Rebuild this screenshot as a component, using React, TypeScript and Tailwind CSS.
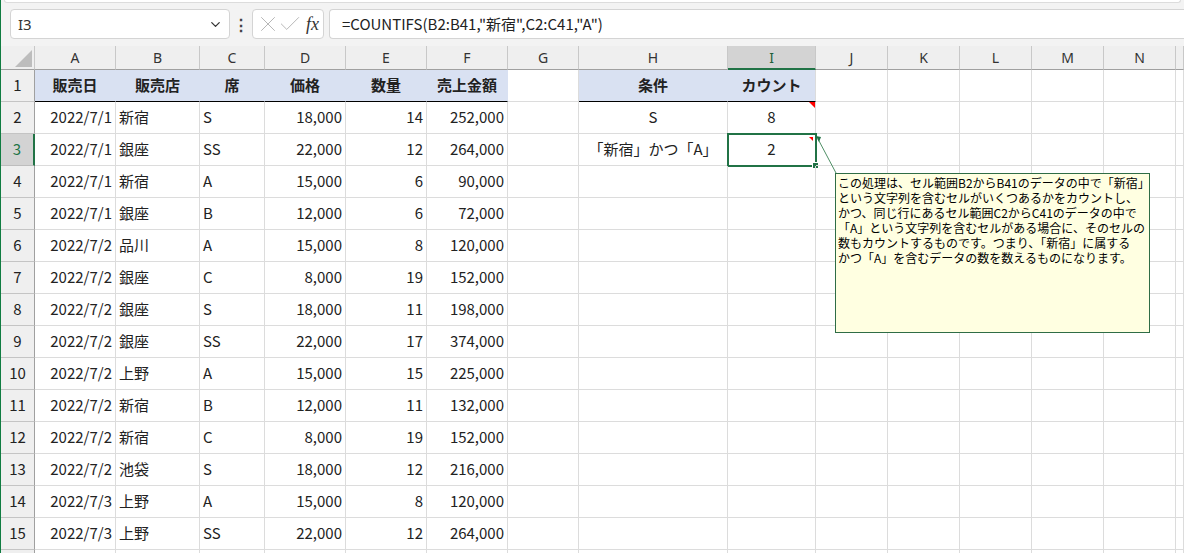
import { ChevronDown, X, Check } from "lucide-react";

type Row = {
  a: string;
  b: string;
  c: string;
  d: string;
  e: string;
  f: string;
  h?: string;
  i?: string;
};

const rows: Row[] = [
  { a: "2022/7/1", b: "新宿", c: "S", d: "18,000", e: "14", f: "252,000", h: "S", i: "8" },
  { a: "2022/7/1", b: "銀座", c: "SS", d: "22,000", e: "12", f: "264,000", h: "「新宿」かつ「A」", i: "2" },
  { a: "2022/7/1", b: "新宿", c: "A", d: "15,000", e: "6", f: "90,000" },
  { a: "2022/7/1", b: "銀座", c: "B", d: "12,000", e: "6", f: "72,000" },
  { a: "2022/7/2", b: "品川", c: "A", d: "15,000", e: "8", f: "120,000" },
  { a: "2022/7/2", b: "銀座", c: "C", d: "8,000", e: "19", f: "152,000" },
  { a: "2022/7/2", b: "銀座", c: "S", d: "18,000", e: "11", f: "198,000" },
  { a: "2022/7/2", b: "銀座", c: "SS", d: "22,000", e: "17", f: "374,000" },
  { a: "2022/7/2", b: "上野", c: "A", d: "15,000", e: "15", f: "225,000" },
  { a: "2022/7/2", b: "新宿", c: "B", d: "12,000", e: "11", f: "132,000" },
  { a: "2022/7/2", b: "新宿", c: "C", d: "8,000", e: "19", f: "152,000" },
  { a: "2022/7/2", b: "池袋", c: "S", d: "18,000", e: "12", f: "216,000" },
  { a: "2022/7/3", b: "上野", c: "A", d: "15,000", e: "8", f: "120,000" },
  { a: "2022/7/3", b: "上野", c: "SS", d: "22,000", e: "12", f: "264,000" },
];

const colLetters = ["A", "B", "C", "D", "E", "F", "G", "H", "I", "J", "K", "L", "M", "N", ""];

const GRID =
  "grid grid-cols-[34px_81px_84px_65px_81px_81px_81px_71px_149px_88px_72px_72px_72px_72px_72px_8px]";

const alignMap = {
  left: "justify-start",
  right: "justify-end",
  center: "justify-center",
};

function Cell({
  children,
  align = "left",
  className = "",
}: {
  children?: React.ReactNode;
  align?: "left" | "right" | "center";
  className?: string;
}) {
  return (
    <div
      className={`relative flex h-[32px] items-center overflow-visible whitespace-nowrap border-r border-b border-[#dcdcdc] px-[3px] ${alignMap[align]} ${className}`}
    >
      {children}
    </div>
  );
}

function RowHead({ n, selected = false }: { n?: number; selected?: boolean }) {
  return selected ? (
    <div className="flex h-[32px] items-center justify-center border-b border-r-2 border-b-[#bdbdbd] border-r-[#217346] bg-[#d3d3d3] text-[#217346]">
      {n}
    </div>
  ) : (
    <div className="flex h-[32px] items-center justify-center border-r border-b border-r-[#a0a0a0] border-b-[#c4c4c4] bg-[#efefef]">
      {n}
    </div>
  );
}

function EmptyCells({ count }: { count: number }) {
  return (
    <>
      {Array.from({ length: count }).map((_, k) => (
        <Cell key={k} />
      ))}
    </>
  );
}

export default function App() {
  const comment = [
    "この処理は、セル範囲B2からB41のデータの中で「新宿」",
    "という文字列を含むセルがいくつあるかをカウントし、",
    "かつ、同じ行にあるセル範囲C2からC41のデータの中で",
    "「A」という文字列を含むセルがある場合に、そのセルの",
    "数もカウントするものです。つまり、「新宿」に属する",
    "かつ「A」を含むデータの数を数えるものになります。",
  ];

  return (
    <div className="relative h-[553px] w-[1184px] overflow-hidden border-l border-[#107c41] bg-white font-['Noto_Sans_CJK_JP',sans-serif] text-[15px] text-[#222]">
      {/* Formula bar */}
      <div className="h-[46px] bg-[#f3f3f3]">
        <div className="mx-[3px] h-[3px] rounded-b-[4px] border-x border-b border-[#dcdcdc] bg-white" />
        <div className="flex pt-[6px] pl-[9px]">
          <div className="flex h-[30px] w-[220px] items-center justify-between rounded-[4px] border border-[#d4d4d4] bg-white pr-[6px] pl-[7px]">
            <span className="font-['Noto_Sans',sans-serif] text-[15px] text-[#333]">I3</span>
            <ChevronDown size={15} strokeWidth={2} className="text-[#333]" />
          </div>
          <div className="flex w-[22px] items-center justify-center text-[16px] font-bold text-[#444]">⋮</div>
          <div className="flex h-[30px] w-[72px] items-center rounded-[4px] border border-[#d4d4d4] bg-white pl-[2px]">
            <X size={26} strokeWidth={0.9} className="text-[#b5b5b5]" />
            <Check size={26} strokeWidth={0.9} className="-ml-[4px] text-[#b5b5b5]" />
            <span className="ml-[3px] font-['Liberation_Serif',serif] text-[18px] italic text-[#333]">fx</span>
          </div>
          <div className="ml-[5px] flex h-[30px] flex-1 items-center rounded-l-[4px] border-y border-l border-[#d4d4d4] bg-white pl-[12px]">
            <span className="text-[15px] text-[#222]">=COUNTIFS(B2:B41,"新宿",C2:C41,"A")</span>
          </div>
        </div>
      </div>

      {/* Column headers */}
      <div className={`${GRID} h-[24px] bg-[#efefef] font-['Noto_Sans',sans-serif] text-[14px] text-[#333]`}>
        <div className="relative border-r border-b border-r-[#c8c8c8] border-b-[#a0a0a0]">
          <svg className="absolute left-[14px] top-[4px]" width="17" height="17" viewBox="0 0 17 17">
            <polygon points="17,0 17,17 0,17" fill="#bdbdbd" />
          </svg>
        </div>
        {colLetters.map((c, k) =>
          c === "I" ? (
            <div
              key={k}
              className="flex items-center justify-center border-r border-b-2 border-r-[#c8c8c8] border-b-[#217346] bg-[#d3d3d3] text-[#1d5e38]"
            >
              {c}
            </div>
          ) : (
            <div
              key={k}
              className="flex items-center justify-center border-r border-b border-r-[#c8c8c8] border-b-[#a0a0a0]"
            >
              {c}
            </div>
          )
        )}
      </div>

      {/* Row 1 headers */}
      <div className={GRID}>
        <RowHead n={1} />
        {["販売日", "販売店", "席", "価格", "数量", "売上金額"].map((t) => (
          <Cell key={t} align="center" className="border-r-[#d9e1f2] border-b-black bg-[#d9e1f2] font-bold">
            {t}
          </Cell>
        ))}
        <Cell />
        <Cell align="center" className="border-r-[#d9e1f2] border-b-black bg-[#d9e1f2] font-bold">
          条件
        </Cell>
        <Cell align="center" className="border-b-black bg-[#d9e1f2] font-bold">
          カウント
        </Cell>
        <EmptyCells count={6} />
      </div>

      {/* Data rows */}
      {rows.map((r, idx) => {
        const n = idx + 2;
        return (
          <div key={n} className={GRID}>
            <RowHead n={n} selected={n === 3} />
            <Cell align="right">{r.a}</Cell>
            <Cell>{r.b}</Cell>
            <Cell>{r.c}</Cell>
            <Cell align="right">{r.d}</Cell>
            <Cell align="right">{r.e}</Cell>
            <Cell align="right">{r.f}</Cell>
            <Cell />
            <Cell align="center">{r.h}</Cell>
            <Cell align="center">
              {r.i}
              {n === 2 && (
                <span className="absolute top-0 right-0 h-0 w-0 border-t-[6px] border-l-[6px] border-t-[#ff0000] border-l-transparent" />
              )}
              {n === 3 && (
                <span className="absolute -top-[1px] -left-[1px] h-[34px] w-[90px] border-2 border-[#217346]">
                  <span className="absolute top-[2px] right-[2px] h-0 w-0 border-t-[4px] border-l-[4px] border-t-[#ff0000] border-l-transparent" />
                  <span className="absolute -right-[4px] -bottom-[4px] h-[7px] w-[7px] border border-white bg-[#217346]" />
                </span>
              )}
            </Cell>
            <EmptyCells count={6} />
          </div>
        );
      })}

      {/* Row 16, only its top edge shows */}
      <div className={GRID}>
        <RowHead />
        <EmptyCells count={15} />
      </div>

      {/* Comment connector */}
      <svg className="pointer-events-none absolute top-0 left-0" width="1183" height="553">
        <line x1="817" y1="139" x2="835" y2="173" stroke="#4f8f66" strokeWidth="1" />
        <polygon points="815,136 820,137 818,142" fill="#217346" />
      </svg>

      {/* Comment box */}
      <div className="absolute top-[173px] left-[834px] h-[160px] w-[315px] border border-[#2f6d46] bg-[#ffffe1] pt-[1px] pl-[2px] text-[12px] leading-[15px] text-black">
        {comment.map((line) => (
          <div key={line} className="whitespace-nowrap">
            {line}
          </div>
        ))}
      </div>
    </div>
  );
}
